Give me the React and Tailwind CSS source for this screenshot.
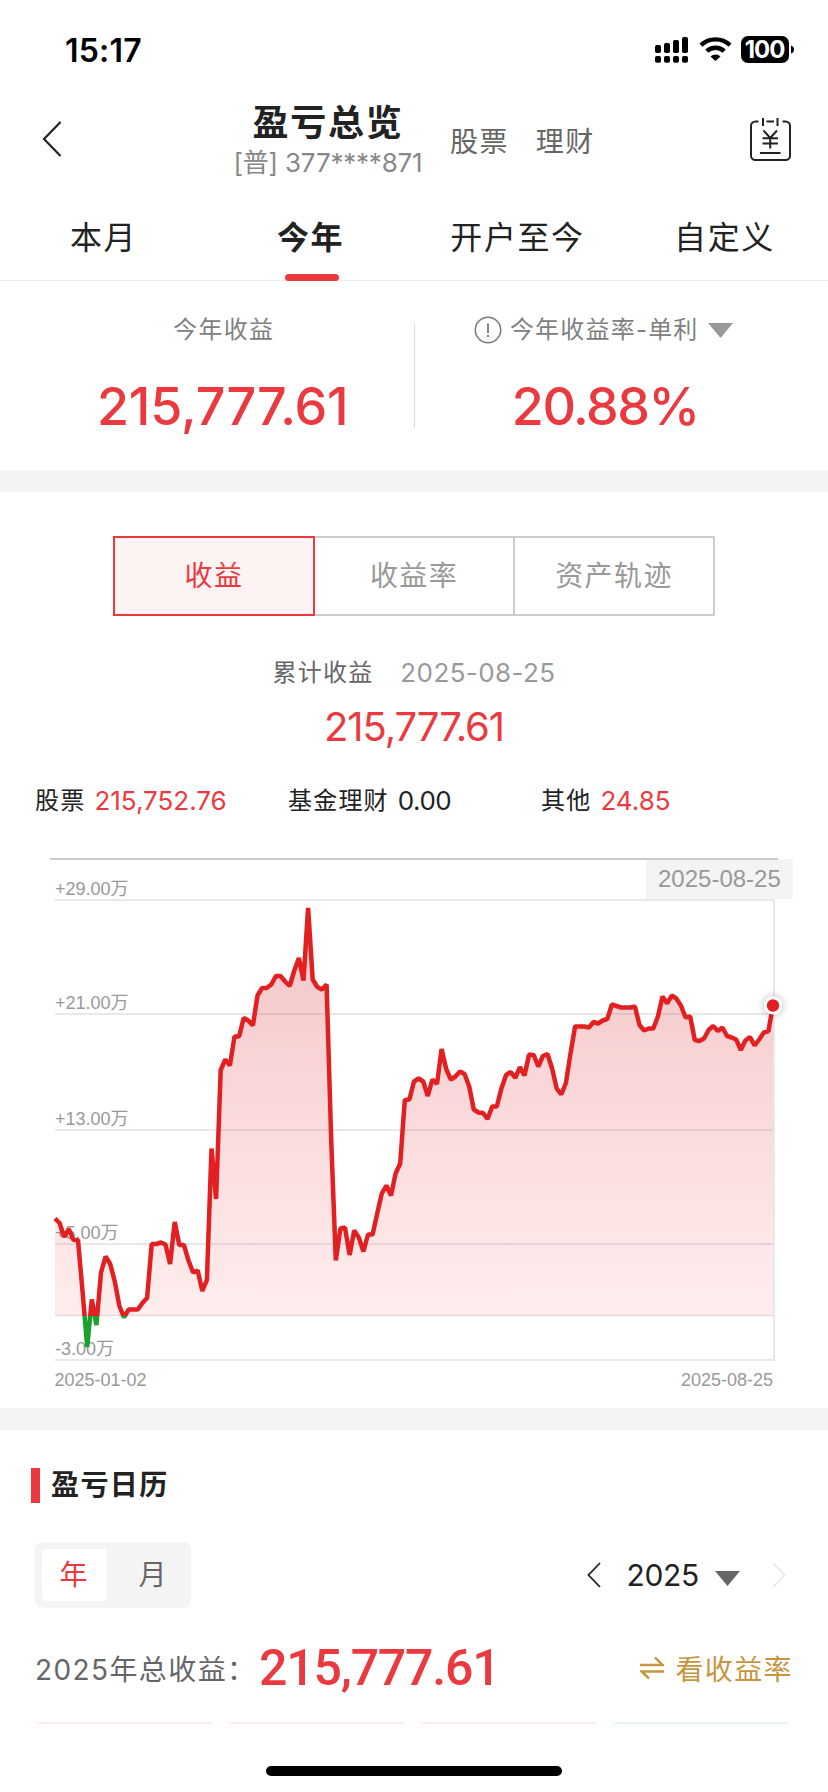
import React from 'react';

const tabs = ['本月', '今年', '开户至今', '自定义'];

const segments = ['收益', '收益率', '资产轨迹'];

const breakdown = [
  { label: '股票', value: '215,752.76', up: true },
  { label: '基金理财', value: '0.00', up: false },
  { label: '其他', value: '24.85', up: true },
];

const gridLines = [
  { y: 900, label: '+29.00万' },
  { y: 1014, label: '+21.00万' },
  { y: 1130, label: '+13.00万' },
  { y: 1244, label: '+5.00万' },
  { y: 1360, label: '-3.00万' },
];

// one point per trading day, in chart coordinates
const points = [
  1218.5, 1223, 1237, 1229, 1240, 1240, 1292, 1347, 1299.5, 1325, 1272.5, 1256.5, 1264, 1281.5, 1306, 1317.5,
  1309.5, 1309.5, 1309.5, 1303, 1298, 1244, 1244, 1242.5, 1244.5, 1264, 1222, 1245, 1245, 1260.5, 1272.5, 1270.5,
  1291, 1280, 1148.5, 1199, 1070, 1059.5, 1065.5, 1036.5, 1036.5, 1018, 1020.5, 1025.5, 995.5, 988, 988, 984.5,
  976, 976, 981.5, 986, 970.5, 958, 980.5, 908, 979.5, 987, 989.5, 984.5, 1140, 1260.5, 1228.5, 1227.5,
  1255, 1230.5, 1237.5, 1251.5, 1234.5, 1234.5, 1213.5, 1193.5, 1185.5, 1195.5, 1173.5, 1163.5, 1100, 1099.5, 1081.5, 1078.5,
  1081.5, 1096, 1079.5, 1084, 1049, 1069, 1079.5, 1076.5, 1071.5, 1074, 1086.5, 1109.5, 1112.5, 1113, 1119, 1106.5,
  1106.5, 1088.5, 1075, 1072, 1078, 1067, 1075.5, 1054.5, 1055, 1066.5, 1056, 1054, 1068.5, 1088.5, 1094.5, 1083,
  1053.5, 1026.5, 1026.5, 1026.5, 1027.5, 1022, 1023.5, 1020.5, 1019, 1004.5, 1006, 1007.5, 1007.5, 1007.5, 1006.5, 1025,
  1030.5, 1028.5, 1028.5, 1016.5, 996.5, 1003.5, 995.5, 998.5, 1005.5, 1017.5, 1016.5, 1040, 1041, 1038.5, 1030, 1026,
  1031, 1027.5, 1036, 1037.5, 1039.5, 1050, 1040.5, 1037, 1045.5, 1039.5, 1032.5, 1031, 1005.5,
];

const X0 = 55;
const X1 = 773;
const ZERO = 1316;

const linePath = points
  .map((y, i) => `${i ? 'L' : 'M'}${(X0 + ((X1 - X0) * i) / (points.length - 1)).toFixed(1)} ${y}`)
  .join('');
const areaPath = `${linePath}L${X1} ${ZERO}L${X0} ${ZERO}Z`;

const StatusBar = () => (
  <div className="h-[98px] flex items-start justify-between pl-[65px] pr-[34px] text-black">
    <span className="mt-[31px] h-10 leading-10 text-[32px] font-semibold tracking-[0.2px]">15:17</span>
    <svg className="mt-[34px]" width="140" height="32" viewBox="654 34 140 32">
      <g>
        {[45, 43, 40, 37].map((top, i) => (
          <g key={top}>
            <rect x={655 + i * 9} y={top} width="6" height={53 - top} rx="1.8" />
            <rect x={655 + i * 9} y="56" width="6" height="6.7" rx="1.8" />
          </g>
        ))}
      </g>
      <g fill="none" stroke="#000" strokeWidth="4.4">
        <path d="M701 45.2a21 21 0 0 1 29 0" />
        <path d="M706.8 51.2a12.6 12.6 0 0 1 17.4 0" />
      </g>
      <path d="M715.5 61l-5-4.6a7.4 7.4 0 0 1 10 0z" />
      <rect x="741" y="36" width="48" height="27" rx="7" />
      <path d="M791 45.5q3 1 3 4t-3 4z" />
      <text x="764.5" y="58.2" textAnchor="middle" fill="#fff" fontSize="24" fontWeight="700" letterSpacing="-1">
        100
      </text>
    </svg>
  </div>
);

const Header = () => (
  <div className="h-[92px] flex items-start">
    <svg className="mt-[22px] ml-[41px]" width="24" height="38" viewBox="0 0 24 38" fill="none" stroke="#222" strokeWidth="2.2">
      <path d="M19.5 2L3 19l16.5 17" />
    </svg>
    <div className="mt-px ml-[168px] w-[190px] flex flex-col items-center">
      <h1 className="h-[48px] leading-[48px] text-[36px] font-bold tracking-[1.8px] text-[#222] whitespace-nowrap">
        盈亏总览
      </h1>
      <p className="h-8 leading-8 text-[26px] tracking-[-0.2px] text-[#888] whitespace-nowrap">[普] 377****871</p>
    </div>
    <div className="mt-[24px] ml-[27px] flex gap-[27px] text-[28px] leading-10 tracking-[1.4px] text-[#666]">
      <span>股票</span>
      <span>理财</span>
    </div>
    <svg className="mt-[19px] ml-auto mr-[36px]" width="43" height="45" viewBox="749 117 43 45" fill="none" stroke="#222" strokeWidth="2">
      <path d="M758.5 121.5h-3a4.5 4.5 0 0 0-4.5 4.5v29.5a4.5 4.5 0 0 0 4.5 4.5h30a4.5 4.5 0 0 0 4.5-4.5V126a4.5 4.5 0 0 0-4.5-4.5h-3" />
      <path d="M763 118v8M777.5 118v8M766.5 121.5h7.5M760 153h20.500" />
      <path d="M763.5 130.5l6.7 7.5 6.8-7.5M762.5 138.200h15.5M762.5 143.400h15.5M770.2 138v10.5" />
    </svg>
  </div>
);

const Tabs = () => (
  <div className="h-[91px] grid grid-cols-4 border-b border-[#ebebeb]">
    {tabs.map((tab) => (
      <div
        key={tab}
        className={`flex flex-col items-center text-[32px] tracking-[1.6px] text-[#222] ${tab === '今年' ? 'font-bold' : ''}`}
      >
        <span className="mt-[24px] h-12 leading-[48px]">{tab}</span>
        {tab === '今年' && <span className="mt-[12px] ml-[3px] w-[54px] h-[7px] shrink-0 rounded-full bg-[#ea3a40]" />}
      </div>
    ))}
  </div>
);

const Summary = () => (
  <div className="h-[189px] px-8 flex">
    <div className="flex-1 flex flex-col items-center">
      <div className="mt-[31px] ml-[2px] h-9 leading-9 text-2xl tracking-[1.2px] text-[#808080]">今年收益</div>
      <div className="mt-[29px] h-[60px] leading-[60px] text-[52px] font-medium tracking-[-0.1px] text-[#ea3a40]">
        215,777.61
      </div>
    </div>
    <div className="w-px h-[105px] mt-[42px] bg-[#ddd]" />
    <div className="flex-1 flex flex-col items-center">
      <div className="mt-[31px] mr-[4px] h-9 leading-9 flex items-center text-2xl tracking-[1.2px] text-[#808080]">
        <svg className="mr-[8px]" width="28" height="28" viewBox="0 0 28 28" fill="none" stroke="#777" strokeWidth="1.5">
          <circle cx="14" cy="14" r="12.7" />
          <path d="M14 7.5v9.5M14 19v2" strokeWidth="1.8" />
        </svg>
        今年收益率-单利
        <svg className="ml-[9px]" width="25" height="15" viewBox="0 0 25 15" fill="#999">
          <path d="M0 0h25L12.5 15z" />
        </svg>
      </div>
      <div className="mt-[29px] h-[60px] leading-[60px] text-[52px] font-medium tracking-[-1.5px] text-[#ea3a40]">
        20.88%
      </div>
    </div>
  </div>
);

const Segments = () => (
  <div className="mx-auto w-[602px] h-20 flex text-[28px] tracking-[1.4px]">
    {segments.map((name, i) => (
      <div
        key={name}
        className={`flex-1 flex items-center justify-center border-2 ${
          i === 0 ? 'border-[#ea3a40] bg-[#fef3f3] text-[#ea3a40]' : 'border-l-0 border-[#ccc] text-[#999]'
        }`}
      >
        {name}
      </div>
    ))}
  </div>
);

const Chart = () => (
  <svg className="block" width="828" height="552" viewBox="0 856 828 552">
    <defs>
      <linearGradient id="area" gradientUnits="userSpaceOnUse" x1="0" y1="908" x2="0" y2={ZERO}>
        <stop offset="0" stopColor="#cc2026" stopOpacity="0.27" />
        <stop offset="1" stopColor="#f9484f" stopOpacity="0.1" />
      </linearGradient>
      <clipPath id="gain">
        <rect x="0" y="856" width="828" height={ZERO - 856} />
      </clipPath>
      <clipPath id="loss">
        <rect x="0" y={ZERO} width="828" height="80" />
      </clipPath>
      <filter id="dotShadow" x="-80%" y="-80%" width="260%" height="260%">
        <feDropShadow dx="0" dy="0" stdDeviation="4" floodColor="#000" floodOpacity="0.3" />
      </filter>
    </defs>

    <rect x="646" y="859" width="147" height="40" fill="#f4f4f4" />
    <path d="M50 859H778" stroke="#ccc" strokeWidth="2" />
    <g stroke="#e8e8e8" strokeWidth="2">
      {gridLines.map((line) => (
        <path key={line.y} d={`M55 ${line.y}H774`} />
      ))}
      <path d="M774 899V1361" />
      <path d="M55 1315.5H774" strokeWidth="1.3" />
    </g>
    <g className="font-['Liberation_Sans','Noto_Sans_CJK_SC',sans-serif]" fill="#999" fontSize="18">
      {gridLines.map((line) => (
        <text key={line.y} x="55" y={line.y - 5.5}>
          {line.label}
        </text>
      ))}
      <text x="54.5" y="1386">2025-01-02</text>
      <text x="773" y="1386" textAnchor="end">2025-08-25</text>
      <text x="658" y="887" fontSize="24">2025-08-25</text>
    </g>

    <path d={areaPath} fill="url(#area)" clipPath="url(#gain)" />
    <g fill="none" strokeWidth="4.5" strokeLinejoin="bevel">
      <path d={linePath} stroke="#e22022" clipPath="url(#gain)" />
      <path d={linePath} stroke="#1aa22c" clipPath="url(#loss)" />
    </g>
    <circle cx="773" cy="1005.5" r="9" fill="#fff" filter="url(#dotShadow)" />
    <circle cx="773" cy="1005.5" r="6.2" fill="#e22022" />
  </svg>
);

const Earnings = () => (
  <div>
    <div className="h-11" />
    <Segments />
    <div className="mt-[36px] h-10 flex items-center justify-center gap-[27px]">
      <span className="mt-px text-2xl tracking-[1.2px] text-[#666]">累计收益</span>
      <span className="text-[26px] tracking-[0.4px] text-[#999]">2025-08-25</span>
    </div>
    <div className="mt-[11px] h-12 leading-[48px] text-center text-[40px] tracking-[-1.1px] text-[#ea3a40]">215,777.61</div>
    <div className="mt-[29px] h-10 pl-[35px] pr-[34px] grid grid-cols-3">
      {breakdown.map((item) => (
        <div key={item.label} className="flex items-center gap-[9px] text-[#222]">
          <span className="mt-px text-2xl tracking-[1.2px]">{item.label}</span>
          <span className={`text-[26px] ${item.up ? 'text-[#ea3a40]' : 'tracking-[-0.5px]'}`}>{item.value}</span>
        </div>
      ))}
    </div>
    <div className="h-9" />
    <Chart />
  </div>
);

const Calendar = () => (
  <div className="h-[294px] overflow-hidden">
    <div className="mt-[35px] ml-[31px] h-10 flex items-center">
      <span className="w-[9px] h-[35px] bg-[#ea3a40]" />
      <h2 className="ml-[11px] text-[28px] leading-10 font-bold tracking-[1.4px] text-[#222]">盈亏日历</h2>
    </div>

    <div className="mt-[37px] h-[66px] pl-[35px] pr-[42px] flex items-center">
      <div className="w-[156px] h-[66px] p-[7px] flex rounded-lg bg-[#f4f4f4] text-[28px]">
        <span className="w-[65px] pr-[2px] flex items-center justify-center rounded bg-white text-[#ea3a40]">年</span>
        <span className="flex-1 pl-[14px] flex items-center justify-center text-[#666]">月</span>
      </div>
      <svg className="ml-auto" width="14" height="26" viewBox="0 0 14 26" fill="none" stroke="#222" strokeWidth="1.8">
        <path d="M13 1L1.5 13 13 25" />
      </svg>
      <span className="ml-[25px] text-[30px] tracking-[-0.3px] text-[#222]">2025</span>
      <svg className="ml-[16px] mt-[6px]" width="25" height="15" viewBox="0 0 25 15" fill="#666">
        <path d="M0 0h25L12.5 15z" />
      </svg>
      <svg className="ml-[32px]" width="14" height="26" viewBox="0 0 14 26" fill="none" stroke="#e8e8e8" strokeWidth="1.8">
        <path d="M1 1l11.5 12L1 25" />
      </svg>
    </div>

    <div className="mt-[30px] h-[60px] pl-[35px] pr-[35px] flex items-center">
      <span className="mt-[3px] w-[224px] text-[28px] tracking-[1.4px] text-[#666] whitespace-nowrap">2025年总收益：</span>
      <span className="font-['Roboto',sans-serif] text-[50px] font-medium tracking-[-1.2px] text-[#ea3a40]">215,777.61</span>
      <svg className="ml-auto mr-[11px]" width="24" height="24" viewBox="0 0 24 24" fill="none" stroke="#c7953f" strokeWidth="2.4">
        <path d="M0 9h22.5l-7.500-7.500M24 15.500H1.500l7.500 7" />
      </svg>
      <span className="mt-[3px] text-[28px] tracking-[1.4px] text-[#c7953f]">看收益率</span>
    </div>

    <div className="mt-6 pl-[35px] pr-[37px] grid grid-cols-4 gap-3">
      <span className="h-24 rounded-md bg-[#fdecec]" />
      <span className="h-24 rounded-md bg-[#fdecec]" />
      <span className="h-24 rounded-md bg-[#fdecec]" />
      <span className="h-24 rounded-md bg-[#e5f5f0]" />
    </div>
  </div>
);

const App = () => {
  return (
    <div className="w-[828px] h-[1792px] overflow-hidden bg-white font-['Inter','Noto_Sans_CJK_SC',sans-serif]">
      <StatusBar />
      <Header />
      <Tabs />
      <Summary />
      <div className="h-[22px] bg-[#f4f4f4]" />
      <Earnings />
      <div className="h-[22px] bg-[#f4f4f4]" />
      <Calendar />
      <div className="mt-[42px] mx-auto w-[296px] h-[10px] rounded-full bg-black" />
    </div>
  );
};

export default App;
